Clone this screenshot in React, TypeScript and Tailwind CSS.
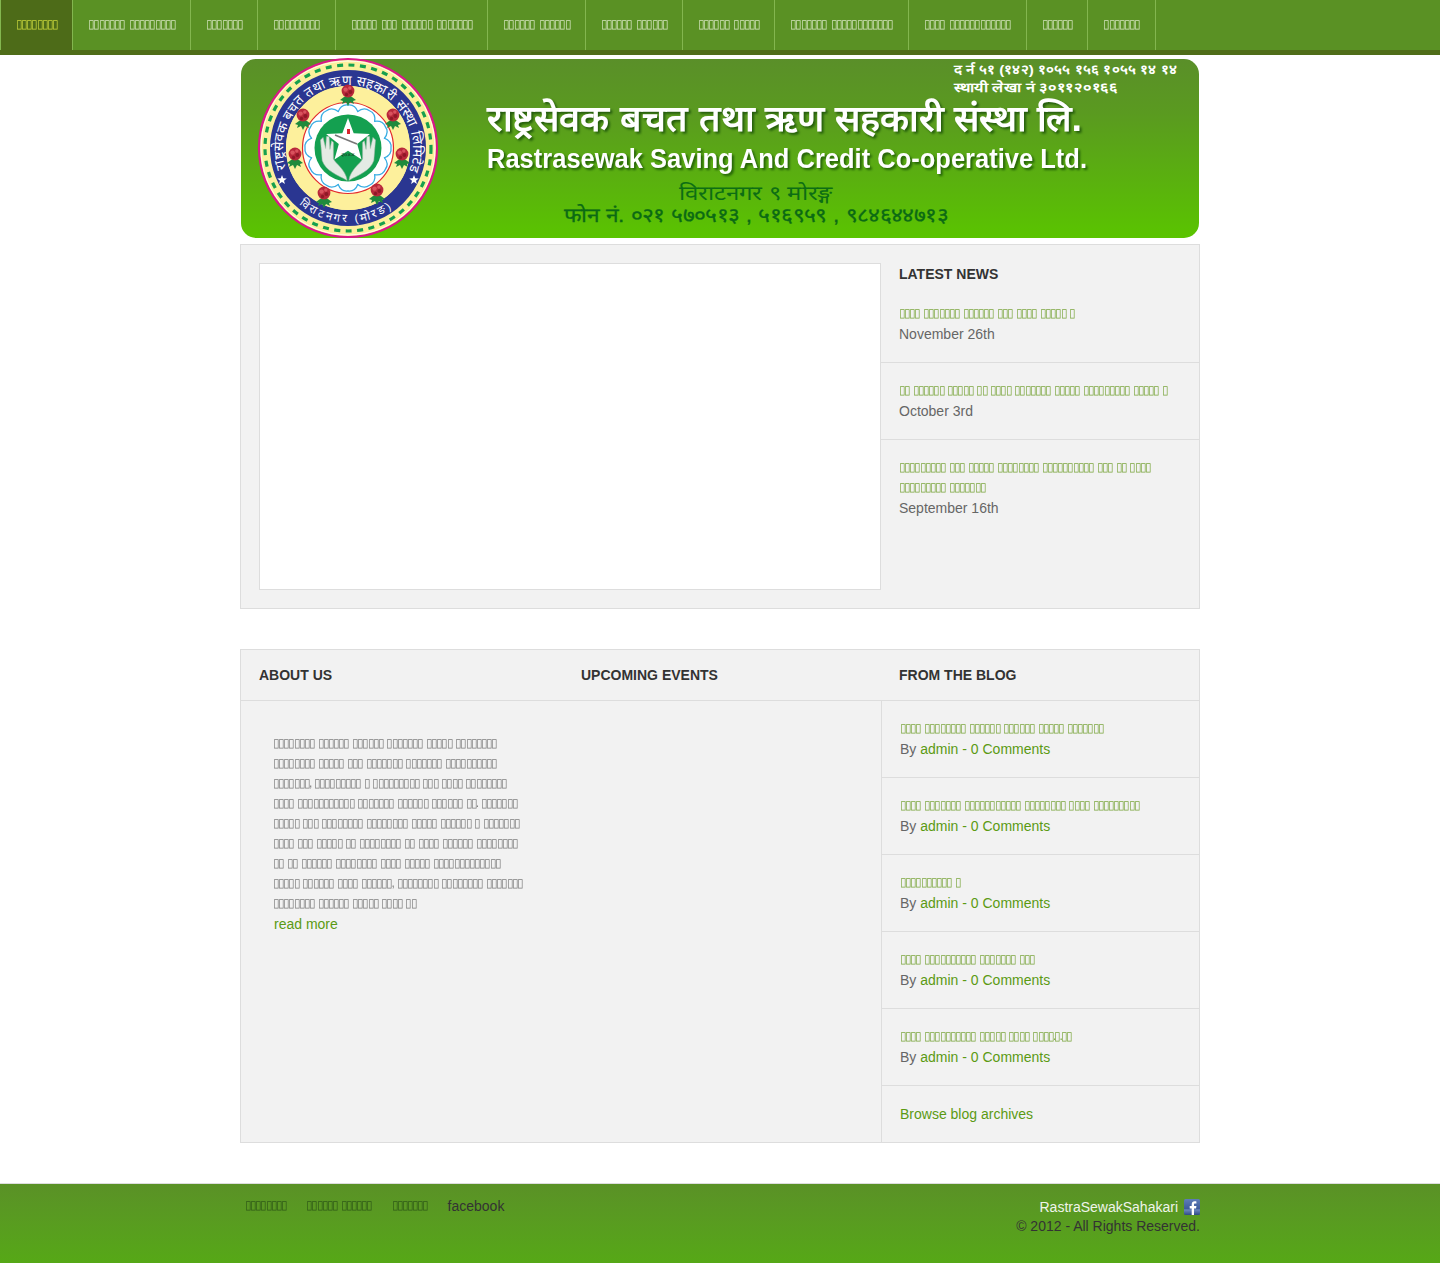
const b = (s: string) => s.replace(/\d+/g, (n) => "\u25AF".repeat(Number(n)));

const tofu = "text-[12px] leading-5 tracking-[-1.85px] [word-spacing:2px] whitespace-pre [will-change:opacity] -translate-y-px";
const navTofu = "text-[12px] leading-5 tracking-[-1.85px] [word-spacing:3.05px] whitespace-pre [will-change:opacity] -translate-y-px";

const navItems = ["8", "7 9", "7", "9", "5 3 6 7", "6 6", "6 6", "6 5", "7 12", "4 12", "6", "7"];

const news = [
  { lines: ["4 7 6 3 4 5 1"], date: "November 26th" },
  { lines: ["2 6 5 2 4 7 5 9 5 1"], date: "October 3rd" },
  { lines: ["9 3 5 8 10 3 2 4", "9 7"], date: "September 16th" },
];

const about = [
  "8 6 6 7 5 8",
  "8 5 3 7 7 10",
  "7, 9 1 9 3 4 8",
  "4 11 7 6 6 2. 7",
  "5 3 8 8 5 6 1 7",
  "4 3 5 2 8 2 4 6 8",
  "2 2 6 8 4 5 13",
  "5 6 4 6, 8 8 7",
  "8 6 5 4 2",
];

const blog = ["4 8 6 6 5 7", "4 7 11 8 4 9", "10 1", "4 10 7 3", "4 10 5 4 4.1.2"];

const cx = 107;
const cy = 89;

function Star({ x, y, r, fill }: { x: number; y: number; r: number; fill: string }) {
  const pts = Array.from({ length: 10 }, (_, i) => {
    const a = (-90 + i * 36) * (Math.PI / 180);
    const q = i % 2 === 0 ? r : r * 0.42;
    return `${x + q * Math.cos(a)},${y + q * Math.sin(a)}`;
  }).join(" ");
  return <polygon points={pts} fill={fill} />;
}

function Flower({ x, y }: { x: number; y: number }) {
  return (
    <g transform={`translate(${x} ${y})`}>
      <path d="M0 1 L-8 7 L-5 8 L-6 11 L-2 9 L0 13 L2 9 L6 11 L5 8 L8 7 Z" fill="#1f8a3c" />
      <circle cx="0" cy="-2" r="6.4" fill="#b8283a" />
      <circle cx="-2.4" cy="-3.4" r="2.2" fill="#d9525d" />
      <circle cx="2.4" cy="-1" r="2" fill="#8f1826" />
      <circle cx="1.8" cy="-5" r="1.7" fill="#d9525d" />
      <circle cx="-1.5" cy="1.5" r="1.7" fill="#8f1826" />
    </g>
  );
}

function Logo() {
  const petals = Array.from({ length: 12 }, (_, i) => i * 30);
  return (
    <g>
      <circle cx={cx} cy={cy} r="89" fill="#fdf09c" stroke="#d9178a" strokeWidth="2.2" />
      <circle cx={cx} cy={cy} r="87" fill="none" stroke="#ffffff" strokeWidth="0.8" />
      <circle cx={cx} cy={cy} r="83" fill="none" stroke="#16a04e" strokeWidth="3.2" strokeDasharray="6 5.5" />
      <circle cx={cx} cy={cy} r="70" fill="none" stroke="#2a3691" strokeWidth="16" />
      <circle cx={cx} cy={cy} r="62" fill="#fdf09c" />
      <circle cx={cx} cy={cy} r="45.5" fill="#ffffff" stroke="#e32a2a" strokeWidth="1.2" />
      {petals.map((a) => (
        <path
          key={a}
          transform={`rotate(${a} ${cx} ${cy})`}
          d={`M${cx - 10} ${cy - 36} Q${cx - 7} ${cy - 44} ${cx} ${cy - 43} Q${cx + 7} ${cy - 44} ${cx + 10} ${cy - 36}`}
          fill="none"
          stroke="#39ade3"
          strokeWidth="1.3"
        />
      ))}
      <circle cx={cx} cy={cy} r="33.5" fill="#14a050" />
      <g transform={`translate(${cx} ${cy + 4}) scale(0.86) translate(${-cx} ${-cy})`}>
        <path
          d={`M${cx - 1} ${cy + 33} C${cx - 12} ${cy + 27} ${cx - 26} ${cy + 22} ${cx - 30} ${cy + 10} L${cx - 32} ${cy - 14} L${cx - 29} ${cy - 17} L${cx - 26} ${cy - 4} L${cx - 25} ${cy - 18} L${cx - 22} ${cy - 18} L${cx - 21} ${cy - 3} L${cx - 19} ${cy - 13} L${cx - 17} ${cy - 11} L${cx - 17} ${cy + 8} C${cx - 14} ${cy + 14} ${cx - 3} ${cy + 20} ${cx - 1} ${cy + 33} Z`}
          fill="#e4ebe4"
          stroke="#a8b8ad"
          strokeWidth="0.6"
        />
        <path
          d={`M${cx + 1} ${cy + 33} C${cx + 12} ${cy + 27} ${cx + 26} ${cy + 22} ${cx + 30} ${cy + 10} L${cx + 32} ${cy - 14} L${cx + 29} ${cy - 17} L${cx + 26} ${cy - 4} L${cx + 25} ${cy - 18} L${cx + 22} ${cy - 18} L${cx + 21} ${cy - 3} L${cx + 19} ${cy - 13} L${cx + 17} ${cy - 11} L${cx + 17} ${cy + 8} C${cx + 14} ${cy + 14} ${cx + 3} ${cy + 20} ${cx + 1} ${cy + 33} Z`}
          fill="#e4ebe4"
          stroke="#a8b8ad"
          strokeWidth="0.6"
        />
      </g>
      <Star x={cx} y={cy - 7} r={23} fill="#ffffff" />
      <rect x={cx - 1} y={cy - 19} width="3" height="5" fill="#d9262e" />
      <path d={`M${cx - 13} ${cy - 13} L${cx + 9} ${cy - 4}`} stroke="#777" strokeWidth="1.5" />
      <text x={cx} y={cy + 9} textAnchor="middle" fontSize="6.5" fill="#173d22">२०××</text>
      <Flower x={cx} y={cy - 55} />
      <Flower x={cx - 45} y={cy - 31} />
      <Flower x={cx + 45} y={cy - 31} />
      <Flower x={cx - 53} y={cy + 8} />
      <Flower x={cx + 54} y={cy + 8} />
      <Flower x={cx - 24} y={cy + 47} />
      <Flower x={cx + 29} y={cy + 44} />
      <Star x={cx - 66} y={cy + 32} r={5} fill="#ffffff" />
      <Star x={cx + 66} y={cy + 32} r={5} fill="#ffffff" />
      <path id="logoTop" d={`M${cx - 62} ${cy + 21} A65 65 0 1 1 ${cx + 62} ${cy + 21}`} fill="none" />
      <path id="logoBottom" d={`M${cx - 49} ${cy + 56} A74 74 0 0 0 ${cx + 49} ${cy + 56}`} fill="none" />
      <text fontSize="13.5" fill="#ffffff">
        <textPath href="#logoTop" textLength="245">राष्ट्रसेवक बचत तथा ऋण सहकारी संस्था लिमिटेड</textPath>
      </text>
      <text fontSize="11.5" fill="#ffffff">
        <textPath href="#logoBottom" textLength="100">विराटनगर (मोरङ)</textPath>
      </text>
    </g>
  );
}

function Banner() {
  const shadow = "[filter:drop-shadow(2px_2px_1px_rgba(0,50,0,0.6))]";
  return (
    <svg width="958" height="179" viewBox="0 0 958 179" className="ml-px block overflow-visible">
      <defs>
        <linearGradient id="bannerBg" x1="0" y1="0" x2="0" y2="1">
          <stop offset="0" stopColor="#5a8f29" />
          <stop offset="0.3" stopColor="#5a9a20" />
          <stop offset="1" stopColor="#5ac400" />
        </linearGradient>
      </defs>
      <rect width="958" height="179" rx="15" fill="url(#bannerBg)" />
      <Logo />
      <text x="713" y="15" fontSize="13" fontWeight="700" fill="#ffffff" textLength="223" lengthAdjust="spacingAndGlyphs">द र्न ५१ (१४२) १०५५ १५६ १०५५ १४ १४</text>
      <text x="713" y="33" fontSize="13" fontWeight="700" fill="#ffffff" textLength="164" lengthAdjust="spacingAndGlyphs">स्थायी लेखा नं ३०११२०१६६</text>
      <text x="246" y="72" fontSize="36" fontWeight="700" fill="#ffffff" textLength="595" lengthAdjust="spacingAndGlyphs" className={shadow}>राष्ट्रसेवक बचत तथा ऋण सहकारी संस्था लि.</text>
      <text x="246" y="109" fontSize="27" fontWeight="700" fill="#ffffff" textLength="600" lengthAdjust="spacingAndGlyphs" className={shadow}>Rastrasewak Saving And Credit Co-operative Ltd.</text>
      <text x="438" y="141" fontSize="20" fill="#0d6e14" textLength="154" lengthAdjust="spacingAndGlyphs">विराटनगर ९ मोरङ्ग</text>
      <text x="323" y="163" fontSize="20" fill="#0b6a14" stroke="#0b6a14" strokeWidth="0.3" textLength="384" lengthAdjust="spacingAndGlyphs">फोन नं. ०२१ ५७०५१३ , ५१६९५९ , ९८४६४४७१३</text>
    </svg>
  );
}

function FbIcon() {
  return (
    <svg width="16" height="16" viewBox="0 0 16 16" className="block">
      <defs>
        <linearGradient id="fbBg" x1="0" y1="0" x2="0" y2="1">
          <stop offset="0" stopColor="#5f7db8" />
          <stop offset="0.65" stopColor="#3b5998" />
          <stop offset="0.66" stopColor="#6f8bc0" />
          <stop offset="1" stopColor="#2f4b86" />
        </linearGradient>
      </defs>
      <rect width="16" height="16" rx="1.5" fill="url(#fbBg)" />
      <path d="M10 16V9.5h2.1l.3-2.4H10V5.7c0-.7.2-1.1 1.2-1.1h1.2V2.4C12.2 2.4 11.5 2.3 10.7 2.3 8.9 2.3 7.7 3.4 7.7 5.4v1.7H5.7v2.4h2V16z" fill="#ffffff" />
    </svg>
  );
}

export default function App() {
  return (
    <div className="w-[1440px] bg-white font-['Liberation_Sans',Arial,sans-serif] text-[14px] leading-5 text-[#666]">
      <nav className="flex h-[55px] border-b-[5px] border-[#4f6d19] bg-[#5a9124]">
        {navItems.map((item, i) => (
          <a
            key={i}
            className={
              i === 0
                ? "flex items-center border-x border-x-[#83b64f] bg-[#4d6b18] px-[15px] text-[#c6d43c]"
                : "flex items-center border-r border-r-[#83b64f] px-[15px] text-[#d2e2bb]"
            }
          >
            <span className={navTofu}>{b(item)}</span>
          </a>
        ))}
      </nav>

      <div className="mx-auto w-[960px]">
        <div className="mt-1">
          <Banner />
        </div>

        <section className="mt-1.5 flex h-[365px] border border-[#ddd] bg-[#f2f2f2]">
          <div className="w-[640px] pt-[18px] pl-[18px]">
            <div className="h-[327px] w-[622px] border border-[#ddd] bg-white" />
          </div>
          <div className="w-[318px] pt-[19px]">
            <h3 className="pl-[18px] font-bold text-[#333]">LATEST NEWS</h3>
            <ul className="mt-0.5">
              {news.map((n, i) => (
                <li key={n.date} className={i < 2 ? "border-b border-[#ddd] p-[18px]" : "p-[18px]"}>
                  {n.lines.map((l) => (
                    <a key={l} className={`block text-[#7ea843] ${tofu}`}>{b(l)}</a>
                  ))}
                  <div>{n.date}</div>
                </li>
              ))}
            </ul>
          </div>
        </section>

        <section className="mt-10 border border-[#ddd] bg-[#f2f2f2]">
          <div className="grid h-[51px] grid-cols-[322px_318px_318px] items-center border-b border-[#ddd] font-bold text-[#333]">
            <h3 className="pl-[18px]">ABOUT US</h3>
            <h3 className="pl-[18px]">UPCOMING EVENTS</h3>
            <h3 className="pl-[18px]">FROM THE BLOG</h3>
          </div>
          <div className="flex">
            <div className="w-[640px] pt-[33px] pl-[33px]">
              {about.map((l) => (
                <div key={l} className={`-ml-px text-[#808080] ${tofu}`}>{b(l)}</div>
              ))}
              <a className="block text-[#5b9a12]">read more</a>
            </div>
            <ul className="w-[318px] border-l border-[#ddd]">
              {blog.map((t) => (
                <li key={t} className="border-b border-[#ddd] p-[18px]">
                  <a className={`block text-[#7ea843] ${tofu}`}>{b(t)}</a>
                  <div>
                    By <a className="text-[#5b9a12]">admin - 0 Comments</a>
                  </div>
                </li>
              ))}
              <li className="p-[18px]">
                <a className="text-[#5b9a12]">Browse blog archives</a>
              </li>
            </ul>
          </div>
        </section>
      </div>

      <footer className="mt-10 h-20 border-t border-[#ddd] bg-linear-to-b from-[#5a9126] to-[#56a816] text-[#333]">
        <div className="mx-auto flex w-[960px] justify-between pt-3">
          <div className="flex gap-5 pl-[5px]">
            <a className={`text-[#2f5a17] ${tofu}`}>{b("8")}</a>
            <a className={`text-[#2f5a17] ${tofu}`}>{b("6 6")}</a>
            <a className={`text-[#2f5a17] ${tofu}`}>{b("7")}</a>
            <a>facebook</a>
          </div>
          <div className="pt-px text-right">
            <div className="flex h-5 items-center justify-end gap-1.5 text-[#f0f4ea]">
              <span>RastraSewakSahakari</span>
              <FbIcon />
            </div>
            <div className="-mt-px">© 2012 - All Rights Reserved.</div>
          </div>
        </div>
      </footer>
    </div>
  );
}
